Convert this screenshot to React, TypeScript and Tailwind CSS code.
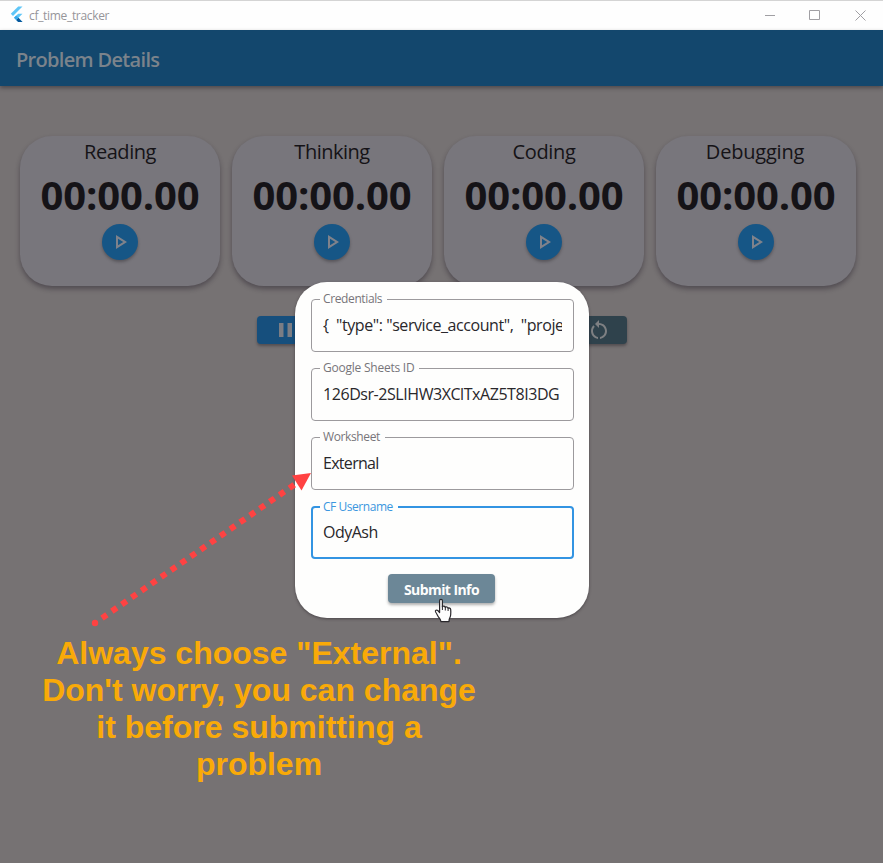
import React from "react";

function PlayIcon() {
  return (
    <svg width="24" height="24" viewBox="0 0 24 24" className="h-6 w-6">
      <path d="M10 8.64L15.27 12 10 15.36V8.64M8 5v14l11-7L8 5z" fill="#7f828b" />
    </svg>
  );
}

function TimerCard({ name, tracking }: { name: string; tracking: string }) {
  return (
    <section className="flex h-[150px] w-[200px] flex-col items-center rounded-[32px] bg-[#78767c] shadow-[0_3px_5px_rgba(30,25,35,0.42)]">
      <h2 className={"h-[30px] text-[20px] leading-[32px] text-[#151317] " + tracking}>{name}</h2>
      <div className="h-[58px] text-[40px] leading-[58px] font-bold tracking-[-0.1px] text-[#151317]">00:00.00</div>
      <button className="flex h-9 w-9 items-center justify-center rounded-full bg-[#165686] shadow-[0_2px_3px_rgba(30,25,30,0.35)]">
        <PlayIcon />
      </button>
    </section>
  );
}

type FieldProps = { label: string; value: string; labelClass: string; valueClass: string; active?: boolean };

function Field({ label, value, labelClass, valueClass, active = false }: FieldProps) {
  return (
    <fieldset
      className={
        "min-w-0 rounded-[4px] pr-[11px] " +
        (active ? "mt-px h-[58px] border-2 border-[#3394e2] pl-[10px]" : "h-[59px] border border-[#9c9a9d] pl-[11px]")
      }
    >
      <legend
        className={
          "-ml-[3px] h-[12px] pr-[5px] pl-[3px] text-[12px] leading-[12px] whitespace-nowrap " +
          (active ? "text-[#3b97df] " : "text-[#77757a] ") +
          labelClass
        }
      >
        {label}
      </legend>
      <div
        className={
          "h-[36px] overflow-hidden text-[16px] whitespace-pre text-[#29272b] " +
          (active ? "leading-[39px] " : "leading-[41px] ") +
          valueClass
        }
      >
        {value}
      </div>
    </fieldset>
  );
}

function FlutterLogo() {
  return (
    <svg width="13" height="17" viewBox="0 0 13 17" className="mb-[2px]">
      <path d="M8.2 0.5h4.3L3 10 0.8 7.8z" fill="#5fc6f7" />
      <path d="M8.2 7.7h4.3L8.5 11.7l4 4.3H8.2L4 11.7z" fill="#5fc6f7" />
      <path d="M6.2 13.9l2.2-2.2 4.1 4.3H8.2z" fill="#08589c" />
      <path d="M4 11.7l2.2-2.2 2.2 2.2-2.2 2.2z" fill="#36a8ea" />
    </svg>
  );
}

export default function App() {
  return (
    <div className="relative flex h-[863px] w-[883px] flex-col overflow-hidden bg-[#767273] font-['Open_Sans','Noto_Sans',sans-serif]">
      <header className="flex h-[30px] shrink-0 items-center border-t border-[#d4d4d4] bg-[#fefefe] pl-[10px] text-[#96959a]">
        <FlutterLogo />
        <span className="ml-[6px] text-[12px] leading-[28px] tracking-[-0.32px]">cf_time_tracker</span>
        <svg className="ml-auto" width="119" height="28" viewBox="764 1 119 28" fill="none" stroke="#a09fa3">
          <path d="M765 14.5h10" />
          <path d="M809.5 9.5h10v9h-10z" />
          <path d="M855.5 9.5l10 10M865.5 9.5l-10 10" />
        </svg>
      </header>
      <div className="flex h-14 shrink-0 items-center bg-[#13476d] pt-1 pl-4 shadow-[0_2px_4px_rgba(30,25,30,0.45)]">
        <h1 className="text-[20px] leading-[30px] font-semibold tracking-[-0.68px] text-[#7b838b]">Problem Details</h1>
      </div>
      <main className="flex flex-col px-5 pt-[50px]">
        <div className="flex gap-3">
          <TimerCard name="Reading" tracking="tracking-[-0.45px]" />
          <TimerCard name="Thinking" tracking="tracking-[-0.5px]" />
          <TimerCard name="Coding" tracking="tracking-[-0.35px]" />
          <TimerCard name="Debugging" tracking="tracking-[-0.2px] -ml-[2px]" />
        </div>
        <div className="mt-[30px] flex justify-between pr-[236px] pl-[237px]">
          <button className="flex h-[28px] w-[64px] items-center rounded-[4px] bg-[#164f7d] pl-[22px] shadow-[0_2px_3px_rgba(30,25,30,0.4)]">
            <svg width="13" height="14" viewBox="0 0 13 14" fill="#7b7d84">
              <path d="M0 0h4.5v14H0zM8.5 0H13v14H8.5z" />
            </svg>
          </button>
          <button className="flex h-[28px] w-[64px] items-center rounded-[4px] bg-[#2f424c] pl-[24px] shadow-[0_2px_3px_rgba(30,25,30,0.4)]">
            <svg width="24" height="24" viewBox="0 0 24 24" fill="#7e8083">
              <path d="M12 5V2L8 6l4 4V7c3.31 0 6 2.69 6 6 0 2.97-2.17 5.43-5 5.91v2.02c3.95-.49 7-3.85 7-7.93 0-4.42-3.58-8-8-8z" />
              <path d="M6 13c0-1.65.67-3.15 1.76-4.24L6.34 7.34C4.9 8.79 4 10.79 4 13c0 4.08 3.05 7.44 7 7.93v-2.02c-2.83-.48-5-2.94-5-5.91z" />
            </svg>
          </button>
        </div>
      </main>

      <div role="dialog" className="absolute top-[282px] left-[295px] flex h-[336px] w-[294px] flex-col rounded-[32px] bg-[#fefefd] pt-[11px] pr-[15px] pl-4 shadow-[0_1px_3px_rgba(40,35,40,0.55)]">
        <div className="flex flex-col gap-[10px]">
          <Field
            label="Credentials"
            value={'{  "type": "service_account",  "project_id"'}
            labelClass="tracking-[-0.38px]"
            valueClass="tracking-[-0.43px]"
          />
          <Field
            label="Google Sheets ID"
            value="126Dsr-2SLIHW3XClTxAZ5T8I3DG"
            labelClass="tracking-[-0.23px]"
            valueClass="tracking-[-0.44px]"
          />
          <Field label="Worksheet" value="External" labelClass="tracking-[-0.38px]" valueClass="tracking-[-0.7px]" />
          <Field label="CF Username" value="OdyAsh" labelClass="tracking-[-0.45px]" valueClass="tracking-[-0.5px]" active />
        </div>
        <button className="mt-[15px] mr-[2px] h-[29px] w-[107px] self-center rounded-[4px] bg-[#6c8797] text-[14px] leading-[31px] font-bold tracking-[-0.58px] text-[#fdfdfd] shadow-[0_2px_3px_rgba(60,60,60,0.4)]">
          Submit Info
        </button>
      </div>

      <svg className="pointer-events-none absolute top-0 left-0" width="883" height="863" viewBox="0 0 883 863">
        <circle cx="95" cy="623" r="3.2" fill="#ff4242" />
        <path d="M102 618.1L295 484.2" stroke="#ff4242" strokeWidth="6" strokeDasharray="6 6" />
        <path d="M292 475.5L311 473l-9.5 17.5z" fill="#ff4242" />
        <path
          d="M439.6 600.8c0-2 2.8-2 2.8 0v6c.4-1.1 2.8-1 2.9.6.7-.8 2.6-.5 2.8.8.9-.6 2.5 0 2.6 1.4.3 3.5.2 6.5-1.1 8.6-.6 1.1-.6 1.5-.6 3.4h-8c-.2-1.9-1.2-2.9-2.4-4.4-1.1-1.5-1.8-3.6-3-5.2-.8-1.5 1-2.5 2.2-1.5l1.8 2z"
          fill="#fdfdfd"
          stroke="#29272b"
          strokeWidth="1.2"
          strokeLinejoin="round"
        />
        <path d="M442.4 606v4M445.3 607v3.5M448.1 608v3" stroke="#29272b" />
      </svg>

      <p className="absolute top-[635px] left-[28px] w-[462px] text-center font-['Liberation_Sans',Arial,sans-serif] text-[32px] leading-[37px] font-bold text-[#f9aa08]">
        Always choose "External".
        <br />
        Don't worry, you can change
        <br />
        it before submitting a
        <br />
        problem
      </p>
    </div>
  );
}
